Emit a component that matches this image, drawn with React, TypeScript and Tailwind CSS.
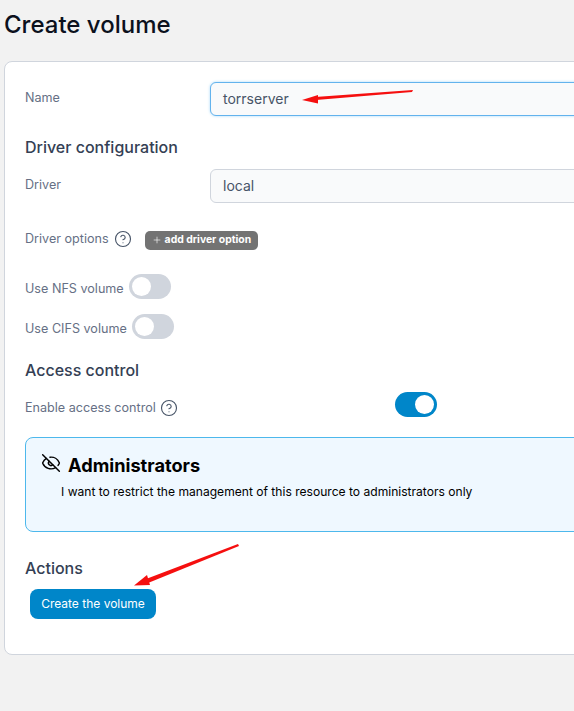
import {CircleHelp, EyeOff, Plus} from 'lucide-react';

const font = "font-['Inter',sans-serif]";

function Toggle({on = false}: {on?: boolean}) {
  return (
    <span
      className={`flex h-[25px] w-[42px] shrink-0 rounded-full p-[3px] ${
        on ? 'justify-end bg-[#0086c9]' : 'justify-start bg-[#d0d5dd]'
      }`}
    >
      <span className="block h-[19px] w-[19px] rounded-full bg-white" />
    </span>
  );
}

function Heading({children, className}: {children: string; className: string}) {
  return <h2 className={`text-base leading-6 font-medium text-[#344054] ${className}`}>{children}</h2>;
}

function Field({label, value, focused = false, className = ''}: {label: string; value: string; focused?: boolean; className?: string}) {
  return (
    <div className={`flex items-start ${className}`}>
      <label className="w-[185px] shrink-0 pt-[6px] text-[12.6px] leading-5 text-[#667085]">{label}</label>
      <div
        className={`flex h-[34px] w-[400px] items-center rounded-md border bg-[#f9fafb] pl-3 text-sm text-[#475467] ${
          focused ? 'border-[#63b3ed] shadow-[0_0_3px_#a8d8f8]' : 'border-[#d0d5dd]'
        }`}
      >
        {value}
      </div>
    </div>
  );
}

export default function App() {
  return (
    <div className={`relative h-[711px] w-[574px] overflow-hidden bg-[#f2f2f2] pl-1 ${font}`}>
      <h1 className="h-[61px] pt-[9px] text-2xl leading-8 font-medium text-[#0c111d]">Create volume</h1>

      <div className="h-[594px] w-[640px] rounded-lg border border-[#d0d5dd] bg-white pt-5 pl-5">
        <Field label="Name" value="torrserver" focused />
        <Heading className="mt-[19px]">Driver configuration</Heading>
        <Field label="Driver" value="local" className="mt-[10px]" />

        <div className="mt-[26px] flex h-5 items-center text-[12.6px] text-[#667085]">
          <span>Driver options</span>
          <CircleHelp className="ml-[5px] h-[18px] w-[18px] text-[#475467]" strokeWidth={1.5} />
          <button
            type="button"
            className="mt-[2px] ml-[13px] flex h-[19px] w-[113px] items-center rounded-[5px] bg-[#737373] pl-[7px] text-[10.4px] font-bold text-white"
          >
            <Plus className="mr-[3px] h-[10px] w-[10px]" strokeWidth={1.5} />
            add driver option
          </button>
        </div>

        <div className="mt-[25px] flex h-[25px] items-center text-[12.6px] text-[#667085]">
          <span className="pt-[5px]">Use NFS volume</span>
          <span className="ml-[5px]"><Toggle /></span>
        </div>
        <div className="mt-[15px] flex h-[25px] items-center text-[12.6px] text-[#667085]">
          <span className="pt-[5px]">Use CIFS volume</span>
          <span className="ml-[5px]"><Toggle /></span>
        </div>

        <Heading className="mt-[19px]">Access control</Heading>
        <div className="mt-[10px] flex h-[25px] items-center text-[12.6px] text-[#667085]">
          <span className="flex w-[370px] items-center pt-[7px]">
            Enable access control
            <CircleHelp className="ml-[4px] h-[18px] w-[18px] text-[#475467]" strokeWidth={1.5} />
          </span>
          <Toggle on />
        </div>

        <div className="mt-5 h-[95px] w-[600px] rounded-lg border border-[#4db8ec] bg-[#eff8ff] pt-[15px] pl-[15px] text-black">
          <div className="flex items-start">
            <EyeOff className="h-5 w-5" strokeWidth={1.75} />
            <span className="ml-[7px] text-[18.2px] leading-6 font-bold">Administrators</span>
          </div>
          <p className="mt-[5px] pl-5 text-[12.08px] leading-5">
            I want to restrict the management of this resource to administrators only
          </p>
        </div>

        <Heading className="mt-6">Actions</Heading>
        <button
          type="button"
          className="mt-[9px] ml-[5px] block h-[30px] w-[126px] rounded-lg bg-[#0086c9] text-xs text-white"
        >
          Create the volume
        </button>
      </div>

      {/* red annotation arrows drawn on the screenshot */}
      <svg className="absolute top-0 left-0" width="574" height="711" fill="none" aria-hidden="true">
        <path d="M413 90 L412 92 L316 100 L315 97 Z" fill="#f50f0f" />
        <path d="M302 100 L318 95 L318 103.5 Z" fill="#f50f0f" />
        <path d="M238 544 L239 546 L148 583 L146 579 Z" fill="#f50f0f" />
        <path d="M134 585.5 L147 575 L150 585 Z" fill="#f50f0f" />
      </svg>
    </div>
  );
}
